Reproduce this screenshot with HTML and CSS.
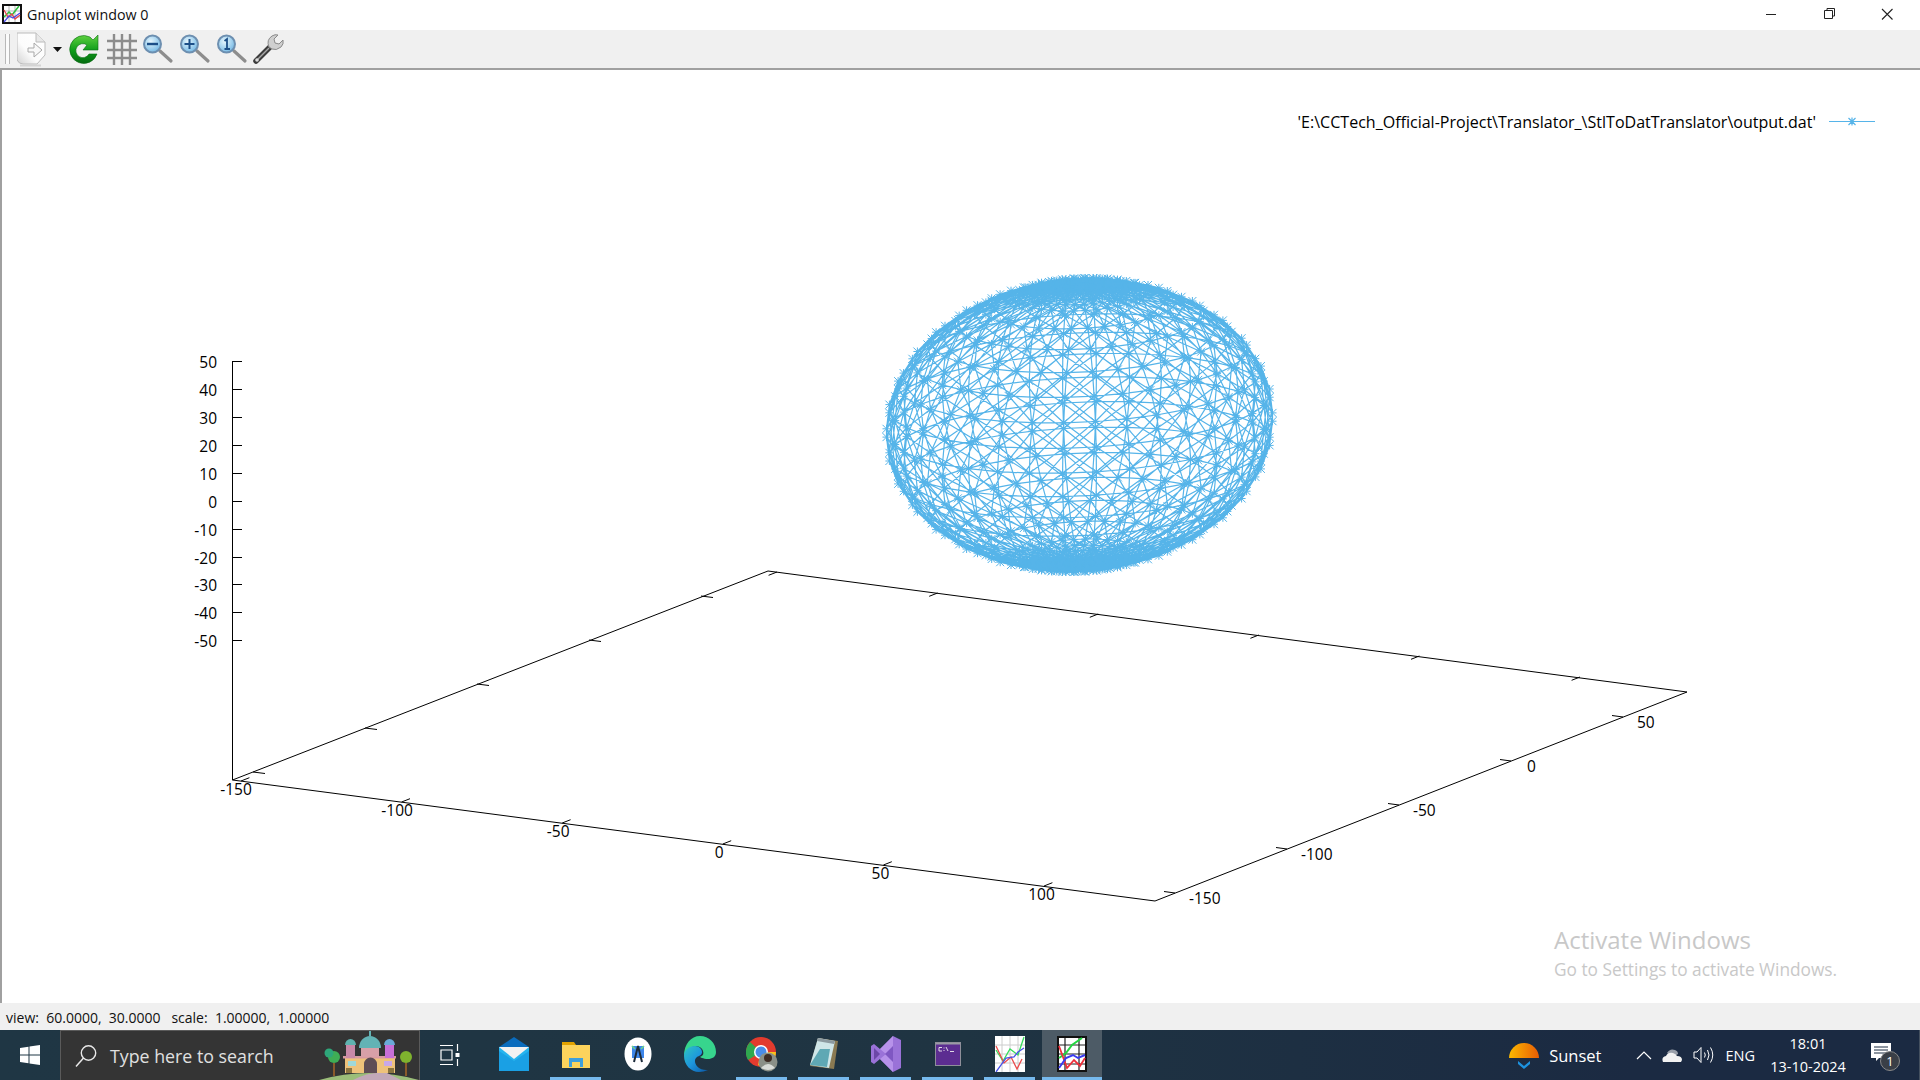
FILE: index.html
```html
<!DOCTYPE html>
<html lang="en">
<head>
<meta charset="UTF-8">
<title>Gnuplot window 0</title>
<link rel="stylesheet" href="styles.css">
</head>
<body>

<!-- TITLE BAR -->
<div class="titlebar">
    <svg class="app-icon" width="20" height="20" viewBox="0 0 20 20">
        <rect x="1" y="1" width="18" height="18" fill="#fff" stroke="#111" stroke-width="2"/>
        <path d="M2 7h16M2 13h16M7 2v16M13 2v16" stroke="#999" stroke-width=".7"/>
        <path d="M2 13 7 8l3 3 7-9" fill="none" stroke="#2fbf3f" stroke-width="1.5"/>
        <path d="M2 6l4 7 4-3 3 5 5-4" fill="none" stroke="#e8404a" stroke-width="1.3"/>
        <path d="M2 18l5-6 4 2 7-5" fill="none" stroke="#4a4ae8" stroke-width="1.3"/>
    </svg>
    <span class="title-text">Gnuplot window 0</span>
    <div class="win-controls">
        <svg class="win-btn" width="58" height="28" viewBox="0 0 58 28"><path d="M24 14.500h10" stroke="#222"/></svg>
        <svg class="win-btn" width="58" height="28" viewBox="0 0 58 28"><path d="M24.500 10.500h8v8h-8zM27 10.500V8.500h7.500v7.500h-2" fill="none" stroke="#222"/></svg>
        <svg class="win-btn" width="58" height="28" viewBox="0 0 58 28"><path d="M24 9l10.500 10.500M34.500 9 24 19.500" stroke="#222" stroke-width="1.100"/></svg>
    </div>
</div>

<!-- TOOLBAR -->
<div class="toolbar">
    <div class="grip"></div>
    <svg class="tool tool-doc" width="49" height="36" viewBox="0 0 49 36">
        <defs>
            <linearGradient id="docfill" x1="1" y1="0" x2="0" y2="1"><stop offset="0" stop-color="#ffffff"/><stop offset=".6" stop-color="#fcfcfc"/><stop offset="1" stop-color="#d2d2d2"/></linearGradient>
        </defs>
        <path d="M0 2h19l9 9v13l-8 9H6q-4 0-6-4z" fill="url(#docfill)" stroke="#bcbcbc"/>
        <path d="M19 2v9h9" fill="#e8e8e8" stroke="#bcbcbc"/>
        <path d="M11 17h6v-5l8 7-8 7v-5h-6z" fill="#f8f8f8" stroke="#a8a8a8"/>
        <path d="M3 34.500h21" stroke="#d4d4d4" stroke-width="2"/>
        <path d="M36 16h9l-4.500 5z" fill="#111"/>
    </svg>
    <svg class="tool" width="37" height="36" viewBox="0 0 37 36">
        <defs>
            <linearGradient id="reload" x1="0" y1="0" x2="0" y2="1"><stop offset="0" stop-color="#5fd13f"/><stop offset=".55" stop-color="#0d9c1a"/><stop offset="1" stop-color="#056b10"/></linearGradient>
        </defs>
        <path d="M24 6A14 14 0 1 0 31 23h-8a7 7 0 1 1-2-9l-4 5h15V4l-5 5z" fill="url(#reload)" stroke="#0a6b14" stroke-width=".6"/>
    </svg>
    <svg class="tool" width="37" height="36" viewBox="0 0 37 36">
        <path d="M4 10h30M4 19h30M4 27h30M11 3v31M19 3v31M27 3v31" stroke="#8c8c8c" stroke-width="2.400"/>
    </svg>
    <svg class="tool" width="37" height="36" viewBox="0 0 37 36">
        <use href="#lens"/>
        <path d="M7 13h11" stroke="#1c4f88" stroke-width="2.400"/>
    </svg>
    <svg class="tool" width="37" height="36" viewBox="0 0 37 36">
        <defs>
            <radialGradient id="glass" cx=".4" cy=".35" r=".7"><stop offset="0" stop-color="#e6f6fd"/><stop offset="1" stop-color="#6fb6e4"/></radialGradient>
            <g id="lens">
                <path d="M20 20 31 30" stroke="#8d8d8d" stroke-width="3.200" stroke-linecap="round"/>
                <circle cx="12.500" cy="13" r="8.500" fill="url(#glass)" stroke="#6d8fb0" stroke-width="2"/>
            </g>
        </defs>
        <use href="#lens"/>
        <path d="M7.500 13h10M12.500 8v10" stroke="#1c4f88" stroke-width="2"/>
    </svg>
    <svg class="tool" width="37" height="36" viewBox="0 0 37 36">
        <use href="#lens"/>
        <path d="M10.500 10l2.500-2V18M10.500 18h5.500" fill="none" stroke="#1c4f88" stroke-width="1.800"/>
    </svg>
    <svg class="tool" width="37" height="36" viewBox="0 0 37 36">
        <path d="M5 30 20 15" stroke="#3c3c3c" stroke-width="5.500" stroke-linecap="round"/>
        <path d="M6 29 18 17" stroke="#a8a8a8" stroke-width="1.500"/>
        <path d="M18 16q-3-7 3-11 3-2 6-1l-4 4 1 4 4 1 4-4q1 4-2 7-5 4-9 2z" fill="#cfcfcf" stroke="#8a8a8a"/>
        <circle cx="6" cy="29" r="1.800" fill="#ddd"/>
    </svg>
</div>

<!-- PLOT AREA, filled in by plot.js -->
<div class="plot">
    <svg id="plot-svg" class="plot-svg" width="1918" height="933" viewBox="2 70 1918 933">
        <g id="mesh"></g>
        <g id="axes"></g>
        <g id="labels" class="axis-labels"></g>
        <text class="legend-text" x="1816" y="127.500" text-anchor="end">'E:\CCTech_Official-Project\Translator_\StlToDatTranslator\output.dat'</text>
        <path class="legend-line" d="M1829 121.500h46M1848.500 118l7 7M1855.500 118l-7 7M1852 117.500v8"/>
    </svg>
    <div class="watermark">
        <div class="wm-title">Activate Windows</div>
        <div class="wm-sub">Go to Settings to activate Windows.</div>
    </div>
</div>

<!-- STATUS BAR -->
<div class="statusbar">view:  60.0000,  30.0000   scale:  1.00000,  1.00000</div>

<!-- TASKBAR -->
<div class="taskbar">
    <div class="start">
        <svg width="20" height="20" viewBox="0 0 20 20"><path d="M0 3l8.500-1.300v7.800H0zM9.500 1.500 20 0v9.500H9.500zM0 10.500h8.500v7.800L0 17zM9.500 10.500H20V20L9.500 18.500z" fill="#fff"/></svg>
    </div>
    <div class="search">
        <svg width="24" height="24" viewBox="0 0 24 24"><circle cx="14.500" cy="9" r="7.200" fill="none" stroke="#e8e8e8" stroke-width="1.400"/><path d="M9.500 14 2 22.500" stroke="#e8e8e8" stroke-width="1.500"/></svg>
        <span class="search-text">Type here to search</span>
        <svg class="search-art" width="100" height="50" viewBox="0 0 100 50">
            <path d="M0 50Q50 36 100 50z" fill="#9bbd79"/>
            <path d="M34 50q16-9 34-7l14 7z" fill="#c2a8b8"/>
            <path d="M15 46V33" stroke="#8a5a2a" stroke-width="2"/>
            <circle cx="15" cy="27" r="6" fill="#3fae55"/>
            <circle cx="10" cy="23" r="4.500" fill="#2ea77a"/>
            <path d="M87 46V33" stroke="#8a5a2a" stroke-width="2"/>
            <circle cx="87" cy="27" r="6" fill="#7fb32e"/>
            <rect x="26" y="27" width="50" height="16" fill="#eec27a"/>
            <rect x="24" y="26" width="53" height="2.500" fill="#d89aa0"/>
            <rect x="27" y="14" width="9" height="14" fill="#c889a8"/>
            <path d="M26 15a5.500 6 0 0 1 11 0z" fill="#5fb3b0"/>
            <rect x="66" y="14" width="9" height="14" fill="#c86fd8"/>
            <path d="M65 15a5.500 6 0 0 1 11 0z" fill="#6aaad8"/>
            <rect x="42" y="18" width="18" height="9" fill="#d8a0a8"/>
            <path d="M40 18a11 12 0 0 1 22 0z" fill="#63b3b5"/>
            <path d="M51 6V1" stroke="#63b3b5" stroke-width="2"/>
            <path d="M45 43V34a6.500 6.500 0 0 1 13 0v9z" fill="#5e4d55"/>
            <rect x="29" y="31" width="8" height="5" fill="#9fd8d8"/>
            <rect x="65" y="31" width="8" height="5" fill="#c8a8e8"/>
            <rect x="27" y="38" width="6" height="5" fill="#8a7440"/>
            <rect x="69" y="38" width="6" height="5" fill="#8a7440"/>
        </svg>
    </div>
    <div class="task-view">
        <svg width="20" height="22" viewBox="0 0 20 22"><path d="M0 1.500h13M0 20.500h13M1 6h11v10H1zM1 6M17.500 0v7M17.500 15v7" fill="none" stroke="#fff" stroke-width="1.200"/><rect x="15.500" y="9" width="4" height="4" fill="#fff"/></svg>
    </div>

    <div class="task">
        <svg width="30" height="34" viewBox="0 0 30 34">
            <path d="M0 10 15 0l15 10v24H0z" fill="#0a6cbd"/>
            <path d="M0 10h30v24H0z" fill="#26b4ee"/>
            <path d="M0 10h30L15 22z" fill="#f2f2f2"/>
            <path d="M0 34V14l15 10 15-10v20z" fill="#1aa0e4"/>
        </svg>
    </div>
    <div class="task open">
        <svg width="28" height="28" viewBox="0 0 28 28">
            <path d="M0 2h12l2 3h14v6H0z" fill="#e2a200"/>
            <path d="M0 5h28v23H0z" fill="#fcd35c"/>
            <path d="M7 27v-9h14v9h-3v-5h-8v5z" fill="#3f9fdb"/>
        </svg>
    </div>
    <div class="task">
        <svg width="28" height="34" viewBox="0 0 28 34">
            <ellipse cx="14" cy="17" rx="13.500" ry="16.500" fill="#fff"/>
            <path d="M8 9h12v12H8z" fill="#3d86ea"/>
            <path d="M10 25l4-16 4 16" fill="none" stroke="#1b2a3a" stroke-width="2"/>
            <path d="M8 9l3 3M20 9l-3 3" stroke="#6cd28c" stroke-width="1.600"/>
        </svg>
    </div>
    <div class="task">
        <svg width="32" height="36" viewBox="0 0 32 36">
            <defs>
                <linearGradient id="edge" x1="0" y1="0" x2="1" y2="1"><stop offset="0" stop-color="#2fc5c0"/><stop offset=".5" stop-color="#1d96dd"/><stop offset="1" stop-color="#0b56a4"/></linearGradient>
            </defs>
            <path d="M16 0c9 0 16 7 16 16 0 5-4 7-8 7-5 0-8-2-8-2 3-1 4-3 3-6C18 11 13 9 8 11 4 13 1 16 0 20 0 8 7 0 16 0z" fill="#37d58d"/>
            <path d="M0 20c0-6 5-10 11-10 4 0 7 3 7 6s-3 4-5 5c-3 2-3 7 2 11 3 2 7 2 9 2-3 1-6 2-9 2C7 36 0 29 0 20z" fill="url(#edge)"/>
        </svg>
    </div>
    <div class="task open">
        <svg width="32" height="36" viewBox="0 0 32 36">
            <circle cx="15" cy="16" r="15" fill="#e33b2e"/>
            <path d="M15 16 2 24A15 15 0 0 1 4 6z" fill="#2fa84f"/>
            <path d="M15 16h15a15 15 0 0 1-15 15l-3-2z" fill="#f8c21c"/>
            <circle cx="15" cy="16" r="7" fill="#fff"/>
            <circle cx="15" cy="16" r="5.500" fill="#4a8de8"/>
            <circle cx="22" cy="26" r="9.500" fill="#8a9088"/>
            <circle cx="22" cy="22" r="4" fill="#3d2c24"/>
            <path d="M15 32q7-8 14 0-7 4-14 0z" fill="#d8dcd8"/>
        </svg>
    </div>
    <div class="task open">
        <svg width="28" height="34" viewBox="0 0 28 34">
            <path d="M8 1l20 3-4 28-24-3z" fill="#8a7a52"/>
            <path d="M8 1l17 3-6 27L0 28z" fill="#cfe6e8"/>
            <path d="M0 28 10 12h10l-3 18z" fill="#5fa8b4"/>
            <path d="M8 1l17 3-1 3L7 4z" fill="#8c9aa0"/>
        </svg>
    </div>
    <div class="task open">
        <svg width="30" height="36" viewBox="0 0 30 36">
            <path d="M22 0l8 4v28l-8 4-13-13-6 5-3-2V10l3-2 6 5z" fill="#9a72d8"/>
            <path d="M22 0v36L9 23l6-5-6-5z" fill="#b792ea"/>
            <path d="M3 12v12l6-6z" fill="#6c47a8"/>
            <path d="M22 10v16l-8-8z" fill="#7f57c2"/>
        </svg>
    </div>
    <div class="task open">
        <svg width="26" height="24" viewBox="0 0 26 24">
            <rect x=".5" y=".5" width="25" height="23" fill="#5c2d91" stroke="#8f8f9a"/>
            <path d="M1 1h24v1.500H1z" fill="#9b9ba5"/>
            <path d="M4 5.500h3M4 9h3M4 5.500v3.500M9 5.500v1M9 8v1M11 5l2 4M15 9.500h4" stroke="#eee" fill="none" stroke-width=".9"/>
        </svg>
    </div>
    <div class="task open">
        <svg width="30" height="36" viewBox="0 0 30 36">
            <rect width="30" height="36" fill="#fff"/>
            <path d="M0 9h30M0 18h30M0 27h30M7 0v36M15 0v36M23 0v36" stroke="#ccc"/>
            <path d="M1 14 8 25l7-12 8 6 6-18" fill="none" stroke="#35dc5a" stroke-width="1.300"/>
            <path d="M1 10l8 17 7-6 6 12 5-10" fill="none" stroke="#ea4a4a" stroke-width="1.300"/>
            <path d="M1 36 11 22l8-1 4-5 6-4" fill="none" stroke="#4a52e8" stroke-width="1.300"/>
        </svg>
    </div>
    <div class="task open active">
        <svg width="30" height="36" viewBox="0 0 30 36">
            <rect x="1" y="1" width="28" height="34" fill="#fff" stroke="#111" stroke-width="2"/>
            <path d="M2 9h26M2 18h26M2 28h26M8 2v32M22 2v32" stroke="#222" stroke-width="1.200"/>
            <path d="M2 22 9 17l6-8 10-7" fill="none" stroke="#22d640" stroke-width="2"/>
            <path d="M2 10l8 22 7-8 6 6 5-8" fill="none" stroke="#ef2f3a" stroke-width="1.800"/>
            <path d="M2 32 9 22l7-3 5 3 7-3" fill="none" stroke="#3a3af0" stroke-width="2"/>
        </svg>
    </div>

    <div class="tray">
        <svg class="tray-sun" width="32" height="36" viewBox="0 0 32 36">
            <defs>
                <linearGradient id="sun" x1="0" y1="0" x2="1" y2="0"><stop offset="0" stop-color="#fcb900"/><stop offset="1" stop-color="#e85d04"/></linearGradient>
            </defs>
            <path d="M1 21a15 15 0 1 1 30 0z" fill="url(#sun)"/>
            <path d="M10 24l6 5 6-5v3l-6 5-6-5z" fill="#1d93e0"/>
        </svg>
        <span class="tray-weather">Sunset</span>
        <svg class="tray-icon chevron" width="16" height="10" viewBox="0 0 16 10"><path d="M1 9l7-7 7 7" fill="none" stroke="#fff" stroke-width="1.200"/></svg>
        <svg class="tray-icon cloud" width="21" height="14" viewBox="0 0 21 14"><path d="M5 5q3-5 8-3 3 1 3 4l-5 3z" fill="#9aa0aa"/><path d="M1 14q-2-5 3-6 2-4 7-3 3 1 4 3 5 0 5 4l-1 2z" fill="#f2f2f2"/></svg>
        <svg class="tray-icon speaker" width="21" height="18" viewBox="0 0 21 18"><path d="M1 6h3l4-4.500v15L4 12H1zM11.500 6.500q1.500 2.500 0 5M14.500 4q3 5 0 10M17.500 1.500q4.500 7.500 0 15" fill="none" stroke="#fff" stroke-width="1"/></svg>
        <span class="tray-lang">ENG</span>
        <div class="tray-clock">
            <span>18:01</span>
            <span>13-10-2024</span>
        </div>
        <div class="tray-notify">
            <svg width="20" height="20" viewBox="0 0 20 20"><path d="M0 0h20v15H8l-3 3v-3H0z" fill="#fff"/><path d="M3 4h14M3 7h14M3 10h14" stroke="#1b2a41" stroke-width="1"/></svg>
            <span class="notify-badge">1</span>
        </div>
    </div>
</div>

<script src="plot.js"></script>
</body>
</html>
```

FILE: styles.css
```css
* {
    box-sizing: border-box;
}

body {
    margin: 0;
    width: 1920px;
    height: 1080px;
    display: flex;
    flex-direction: column;
    overflow: hidden;
    background: white;
    font-family: 'Open Sans', sans-serif;
    color: black;
}

/* TITLE BAR */
.titlebar {
    height: 30px;
    display: flex;
    align-items: center;
    background: white;
    padding-left: 2px;
    padding-bottom: 2px;
}

.title-text {
    margin-left: 5px;
    font-size: 14.3px;
    color: #111;
}

.win-controls {
    margin-left: auto;
    display: flex;
    padding-right: 4px;
}

/* TOOLBAR */
.toolbar {
    height: 40px;
    display: flex;
    align-items: center;
    background: #f0f0f0;
    border-bottom: 2px solid #a0a0a0;
    padding-left: 5px;
}

.grip {
    width: 5px;
    height: 30px;
    border-left: 1px solid #b8b8b8;
    border-right: 1px solid #b8b8b8;
    background: #fbfbfb;
}

.tool {
    flex: none;
}

.tool-doc {
    margin-left: 7px;
}

/* PLOT */
.plot {
    position: relative;
    height: 933px;
    border-left: 2px solid #a0a0a0;
    background: white;
}

.plot-svg {
    display: block;
}

.axis-labels text {
    font-family: 'Open Sans', sans-serif;
    font-size: 15.5px;
    fill: #000;
}

.legend-text {
    font-family: 'Open Sans', sans-serif;
    font-size: 16.05px;
    fill: #000;
}

.legend-line {
    fill: none;
    stroke: #56b4e9;
    stroke-width: 1.2;
}

.watermark {
    position: absolute;
    left: 1552px;
    top: 854px;
    color: #c8c8c8;
}

.wm-title {
    font-size: 24px;
    line-height: 32px;
}

.wm-sub {
    font-size: 17.3px;
    line-height: 27px;
}

/* STATUS BAR */
.statusbar {
    height: 27px;
    display: flex;
    align-items: center;
    padding-left: 6px;
    padding-top: 2px;
    background: #f0f0f0;
    font-size: 14px;
    white-space: pre;
    color: #111;
}

/* TASKBAR */
.taskbar {
    height: 50px;
    display: flex;
    align-items: stretch;
    background: linear-gradient(90deg, #1f3644 0%, #1f3442 50%, #1b2a42 85%, #1b2a42 100%);
    color: white;
}

.start {
    width: 60px;
    display: flex;
    align-items: center;
    justify-content: center;
}

.search {
    width: 360px;
    display: flex;
    align-items: center;
    background: #343434;
    border: 1px solid #5a5a5a;
    border-bottom: none;
    padding-left: 13px;
}

.search-text {
    margin-left: 12px;
    font-size: 17.8px;
    color: #e0e0e0;
}

.search-art {
    margin-left: auto;
    align-self: flex-end;
}

.task-view {
    width: 63px;
    display: flex;
    align-items: center;
    justify-content: center;
    padding-right: 3px;
}

.task {
    width: 62px;
    display: flex;
    align-items: center;
    justify-content: center;
    position: relative;
    padding-bottom: 2px;
}

.task.open::after {
    content: "";
    position: absolute;
    left: 5px;
    right: 6px;
    bottom: 0;
    height: 3px;
    background: #76b9ed;
}

.task.active::before {
    content: "";
    position: absolute;
    inset: 0 1px;
    background: #4d5b66;
}

.task.active svg {
    position: relative;
}

.task.active::after {
    left: 1px;
    right: 1px;
}

/* TRAY */
.tray {
    margin-left: auto;
    display: flex;
    align-items: center;
    padding-right: 18px;
    border-right: 1px solid #44505f;
}

.tray-weather {
    margin-left: 9px;
    margin-right: 34.5px;
    font-size: 16.5px;
}

.tray-icon {
    flex: none;
}

.cloud {
    margin-left: 10.5px;
}

.speaker {
    margin-left: 10px;
}

.tray-lang {
    margin-left: 11px;
    font-size: 14.5px;
}

.tray-clock {
    width: 100px;
    margin-left: 3px;
    display: flex;
    flex-direction: column;
    align-items: center;
    gap: 3px;
    font-size: 14.5px;
    line-height: 20px;
}

.tray-notify {
    position: relative;
    width: 35px;
    height: 30px;
    margin-left: 8px;
    padding-top: 3px;
    padding-left: 5px;
}

.notify-badge {
    position: absolute;
    left: 14px;
    top: 11px;
    width: 20px;
    height: 20px;
    border-radius: 50%;
    background: #3a3f47;
    border: 1px solid #888;
    font-size: 13px;
    line-height: 18px;
    text-align: center;
}
```

FILE: plot.js
```js
const SVG_NS = "http://www.w3.org/2000/svg";

const cx = 1079.5, cy = 425, radius = 49.6;
const lonStep = 10;
// rows get closer together towards the poles
const rows = [-90, -86, -82, -78, -74, -70, -60, -50, -40, -30, -20, -10, 0, 10, 20, 30, 40, 50, 60, 70, 74, 78, 82, 86, 90];

function project(lat, lon) {
    const a = lat * Math.PI / 180;
    const b = lon * Math.PI / 180;
    const x = radius * Math.cos(a) * Math.cos(b);
    const y = radius * Math.cos(a) * Math.sin(b);
    const z = radius * Math.sin(a);
    return [cx + 3.2 * x + 2.24 * y, cy + 0.42 * x - 0.88 * y - 2.8 * z];
}

function seg(p, q) {
    return `M${p[0].toFixed(1)} ${p[1].toFixed(1)}L${q[0].toFixed(1)} ${q[1].toFixed(1)}`;
}

function addPath(parent, d, stroke, width) {
    const el = document.createElementNS(SVG_NS, "path");
    el.setAttribute("d", d);
    el.setAttribute("fill", "none");
    el.setAttribute("stroke", stroke);
    el.setAttribute("stroke-width", width);
    parent.appendChild(el);
}

function addLabel(parent, x, y, text, anchor) {
    const el = document.createElementNS(SVG_NS, "text");
    el.setAttribute("x", x);
    el.setAttribute("y", y);
    el.setAttribute("text-anchor", anchor);
    el.textContent = text;
    parent.appendChild(el);
}

function drawMesh() {
    let lines = "", marks = "";
    for (let r = 0; r < rows.length - 1; r++) {
        for (let lon = 0; lon < 360; lon += lonStep) {
            const a = project(rows[r], lon);
            const b = project(rows[r], lon + lonStep);
            const c = project(rows[r + 1], lon);
            const d = project(rows[r + 1], lon + lonStep);
            lines += seg(a, b) + seg(a, c) + seg(a, d) + seg(b, c);
            // star marker on each vertex
            const s = 4;
            marks += seg([a[0] - s, a[1]], [a[0] + s, a[1]]);
            marks += seg([a[0], a[1] - s], [a[0], a[1] + s]);
            marks += seg([a[0] - s, a[1] - s], [a[0] + s, a[1] + s]);
            marks += seg([a[0] - s, a[1] + s], [a[0] + s, a[1] - s]);
        }
    }
    const mesh = document.getElementById("mesh");
    addPath(mesh, lines, "#56b4e9", 1.2);
    addPath(mesh, marks, "#56b4e9", 1);
}

function drawAxes() {
    const axes = document.getElementById("axes");
    const labels = document.getElementById("labels");
    let d = "M232.5 361V780L1155 901L1687 692L768 571L232.5 780";

    // z axis
    [50, 40, 30, 20, 10, 0, -10, -20, -30, -40, -50].forEach((v, i) => {
        const y = Math.round(361 + i * 27.93) + 0.5;
        d += `M232 ${y}h10`;
        addLabel(labels, 217, y + 6.5, v, "end");
    });

    // x axis, front and back edge
    [-150, -100, -50, 0, 50, 100].forEach((v, i) => {
        const x = 241 + i * 160.6, y = 781 + i * 21;
        d += `M${x} ${y}l8.4 -3.3`;
        const bx = 777 + i * 160.6, by = 572 + i * 21;
        d += `M${bx} ${by}l-8.4 3.3`;
        addLabel(labels, 236 + i * 161.1, y + 14, v, "middle");
    });

    // y axis, right and left edge
    [-150, -100, -50, 0, 50].forEach((v, i) => {
        const x = 1175 + i * 112, y = 893 - i * 44;
        d += `M${x} ${y}l-11 -1.5`;
        addLabel(labels, x + 14 + (v === 0 ? 2 : 0), y + 11, v, "start");
        const lx = 253 + i * 112, ly = 772 - i * 44;
        d += `M${lx} ${ly}l12 1.5`;
    });

    addPath(axes, d, "#000", 1);
}

drawMesh();
drawAxes();
```
